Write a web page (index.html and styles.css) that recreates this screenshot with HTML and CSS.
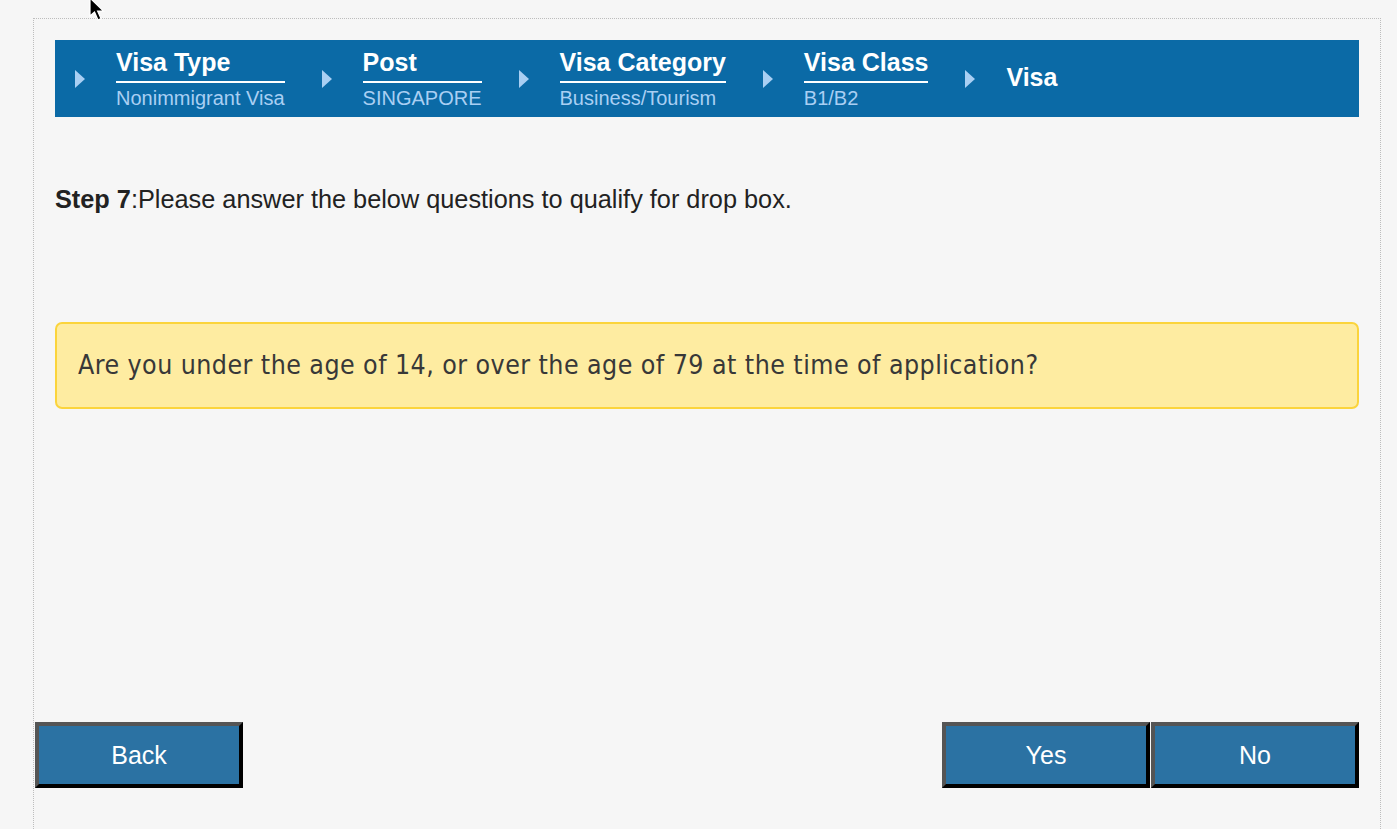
FILE: index.html
```html
<!DOCTYPE html>
<html lang="en">
<head>
<meta charset="utf-8">
<title>Visa Application</title>
<link rel="stylesheet" href="styles.css">
</head>
<body>
<svg class="cursor" width="22" height="26" viewBox="0 0 22 26"><path d="M3 0 L3 18 L7.5 14 L11 22 L14 20.6 L10.6 13 L16.5 13 Z" fill="#000" stroke="#fff" stroke-width="1.2"/></svg>
<div class="frame">
  <nav class="crumbs">
    <span class="arrow"></span>
    <div class="crumb"><div class="crumb-title">Visa Type</div><div class="crumb-sub">Nonimmigrant Visa</div></div>
    <span class="arrow"></span>
    <div class="crumb"><div class="crumb-title">Post</div><div class="crumb-sub">SINGAPORE</div></div>
    <span class="arrow"></span>
    <div class="crumb"><div class="crumb-title">Visa Category</div><div class="crumb-sub">Business/Tourism</div></div>
    <span class="arrow"></span>
    <div class="crumb"><div class="crumb-title">Visa Class</div><div class="crumb-sub">B1/B2</div></div>
    <span class="arrow"></span>
    <div class="crumb-current">Visa</div>
  </nav>

  <p class="step"><b>Step 7</b>:Please answer the below questions to qualify for drop box.</p>

  <div class="question">Are you under the age of 14, or over the age of 79 at the time of application?</div>

  <div class="actions">
    <button class="btn">Back</button>
    <div class="answer-group">
      <button class="btn">Yes</button>
      <button class="btn">No</button>
    </div>
  </div>
</div>
</body>
</html>
```

FILE: styles.css
```css
html, body {
  margin: 0;
  padding: 0;
  background: #f6f6f6;
}
body {
  font-family: "Liberation Sans", Arial, Helvetica, sans-serif;
  overflow: hidden;
  height: 829px;
  position: relative;
}
.cursor {
  position: absolute;
  left: 87px;
  top: -2px;
}
.frame {
  margin: 18px 0 0 33px;
  width: 1348px;
  border: 1px dotted #bdbdbd;
  padding: 21px 21px 120px 21px;
  box-sizing: border-box;
}
.crumbs {
  display: flex;
  align-items: center;
  height: 77px;
  background: #0b6aa6;
  padding-left: 20px;
}
.arrow {
  width: 0;
  height: 0;
  border-left: 10px solid #a9cff3;
  border-top: 9px solid transparent;
  border-bottom: 9px solid transparent;
  margin-right: 31px;
  flex: none;
}
.crumb {
  margin-right: 37px;
}
.crumb-title {
  color: #fff;
  font-weight: bold;
  font-size: 25px;
  line-height: 27px;
  padding-bottom: 5px;
  border-bottom: 2px solid #fff;
}
.crumb-sub {
  color: #a9cff3;
  font-size: 20px;
  line-height: 22px;
  margin-top: 4px;
}
.crumb-current {
  color: #fff;
  font-weight: bold;
  font-size: 25px;
  line-height: 27px;
  margin-top: -3px;
}
.step {
  margin: 67px 0 0 0;
  font-size: 25.3px;
  line-height: 30px;
  color: #222;
}
.question {
  margin-top: 108px;
  background: #feeca1;
  border: 2px solid #fbd43c;
  border-radius: 7px;
  padding: 25px 21px 26px 21px;
  font-family: "DejaVu Sans Condensed", "DejaVu Sans", sans-serif;
  font-size: 26.5px;
  letter-spacing: 0.45px;
  line-height: 32px;
  color: #383838;
}
.actions {
  display: flex;
  justify-content: space-between;
  margin: 313px 0 0 -20px;
}
.answer-group {
  display: flex;
  gap: 1px;
}
.btn {
  width: 208px;
  height: 66px;
  box-sizing: border-box;
  background: #2b72a3;
  color: #fff;
  font-family: "Liberation Sans", Arial, sans-serif;
  font-size: 25px;
  border-style: solid;
  border-width: 4px;
  border-color: #555 #000 #000 #555;
  padding: 0;
  margin: 0;
}
```
